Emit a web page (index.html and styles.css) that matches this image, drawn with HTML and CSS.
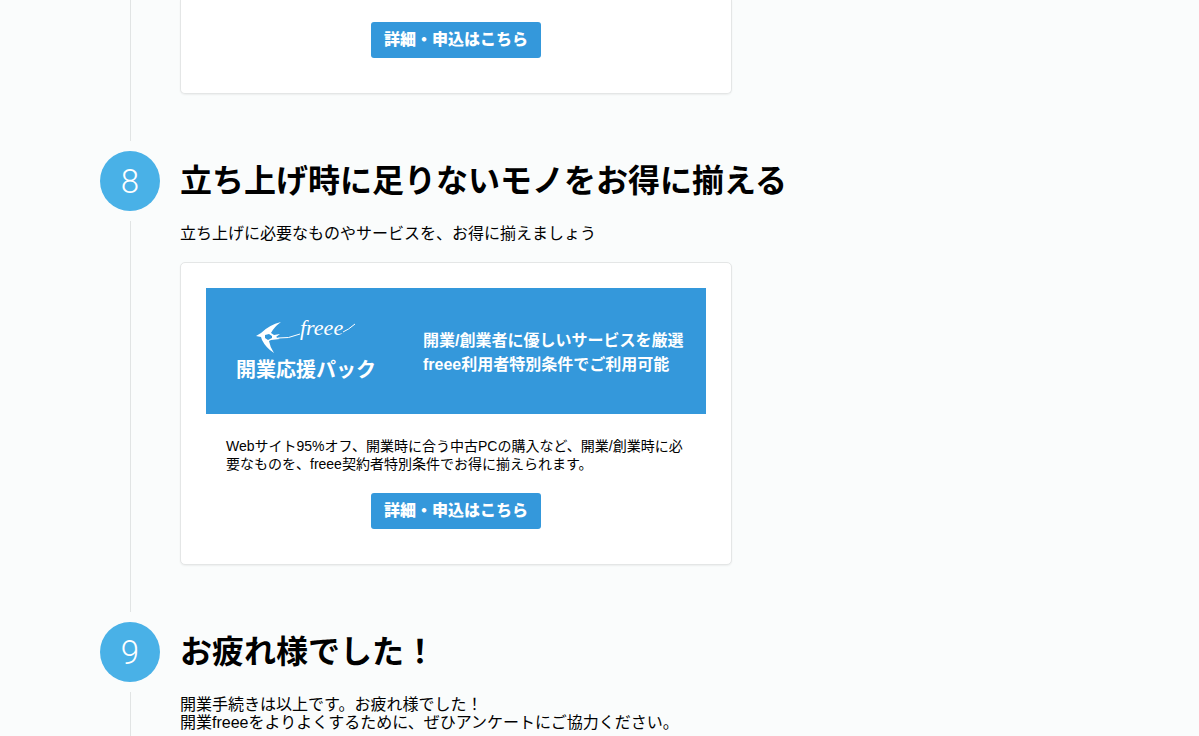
FILE: index.html
```html
<!DOCTYPE html>
<html lang="ja">
	<head>
		<meta charset="UTF-8">
		<title>開業freee</title>
		<link rel="stylesheet" href="styles.css">
	</head>
	<body>
		<main class="steps">
			<section class="step">
				<div class="rail">
					<div class="line line-top"></div>
				</div>
				<div class="content">
					<div class="card card-end">
						<a class="btn" href="#">詳細・申込はこちら</a>
					</div>
				</div>
			</section>

			<section class="step">
				<div class="rail">
					<span class="number">8</span>
					<div class="line"></div>
				</div>
				<div class="content">
					<h2>立ち上げ時に足りないモノをお得に揃える</h2>
					<p class="lead">立ち上げに必要なものやサービスを、お得に揃えましょう</p>
					<div class="card">
						<div class="banner">
							<div class="brand">
								<div class="logo">
									<!-- ツバメ -->
									<svg class="bird" width="44" height="34" viewBox="0 0 44 34" aria-hidden="true">
										<path fill="#fff" fill-rule="evenodd" d="M0 16 5 13Q13 5 25 2 18 7 15 13L18 15 24 14 20 17 24 19 15 20 13 21Q14 27 18 33 10 28 6 20L5 17ZM9 15 9 18 12 20 16 18 16 16 13 14Z"/>
										<path fill="none" stroke="#fff" stroke-width="1" d="M22 18Q32 19 44 14"/>
									</svg>
									<span class="logo-name">freee</span>
									<svg class="tail" width="12" height="14" viewBox="0 0 12 14" aria-hidden="true">
										<path fill="none" stroke="#fff" stroke-width="1" d="M0 12Q5 10 12 4"/>
									</svg>
								</div>
								<strong class="brand-title">開業応援パック</strong>
							</div>
							<p class="catch">開業/創業者に優しいサービスを厳選<br>freee利用者特別条件でご利用可能</p>
						</div>
						<p class="detail">Webサイト95%オフ、開業時に合う中古PCの購入など、開業/創業時に必要なものを、freee契約者特別条件でお得に揃えられます。</p>
						<a class="btn" href="#">詳細・申込はこちら</a>
					</div>
				</div>
			</section>

			<section class="step">
				<div class="rail">
					<span class="number">9</span>
					<div class="line"></div>
				</div>
				<div class="content">
					<h2>お疲れ様でした！</h2>
					<p class="lead">開業手続きは以上です。お疲れ様でした！<br>開業freeeをよりよくするために、ぜひアンケートにご協力ください。</p>
				</div>
			</section>
		</main>
	</body>
</html>
```
FILE: styles.css
```css
*{
	box-sizing:border-box;
}
body{
	margin:0;
	background-color:#fafcfc;
	color:#000;
	font-family:"Liberation Sans","Noto Sans CJK JP",sans-serif;
	font-size:16px;
	line-height:18px;
}
h2,p{
	margin:0;
}
.steps{
	padding:0 100px;
}
.step{
	display:flex;
	gap:20px;
}
.rail{
	display:flex;
	flex-direction:column;
	align-items:flex-end;
	width:60px;
	flex-shrink:0;
}
.number{
	width:60px;
	height:60px;
	border-radius:50%;
	background-color:#49b1e7;
	color:#fff;
	font-family:Roboto,sans-serif;
	font-size:33px;
	font-weight:300;
	line-height:62px;
	text-align:center;
}
.line{
	flex:1;
	width:30px;
	margin:10px 0;
	border-left:1px solid #e1e4e4;
}
.line-top{
	margin-top:0;
}
.content{
	flex:1;
	padding-bottom:57px;
}
h2{
	font-size:32px;
	line-height:60px;
}
.lead{
	margin-top:14px;
}
.card{
	display:flex;
	flex-direction:column;
	align-items:center;
	max-width:552px;
	margin-top:19px;
	padding:25px 25px 35px;
	background-color:#fff;
	border:1px solid #e4e6e6;
	border-radius:5px;
	box-shadow:0 1px 2px rgba(0,0,0,0.06);
}
.card-end{
	margin-top:0;
	padding-top:22px;
	border-top:0;
	border-radius:0 0 5px 5px;
}
.btn{
	padding:0 13px;
	border-radius:3px;
	background-color:#3498db;
	color:#fff;
	font-weight:900;
	line-height:36px;
	text-decoration:none;
}
.banner{
	display:flex;
	align-items:center;
	width:100%;
	height:126px;
	padding:4px 0 0 30px;
	background-color:#3498db;
	color:#fff;
}
.brand{
	width:187px;
	flex-shrink:0;
}
.logo{
	display:flex;
	padding-left:20px;
}
.bird,.tail{
	flex-shrink:0;
}
.logo-name{
	font-family:"Liberation Serif",serif;
	font-size:22px;
	font-style:italic;
	line-height:16px;
}
.brand-title{
	display:block;
	font-size:20px;
	line-height:32px;
}
.catch{
	font-weight:700;
	line-height:24px;
}
.detail{
	margin:23px 0 20px;
	padding:0 20px;
	font-size:14px;
}
```
